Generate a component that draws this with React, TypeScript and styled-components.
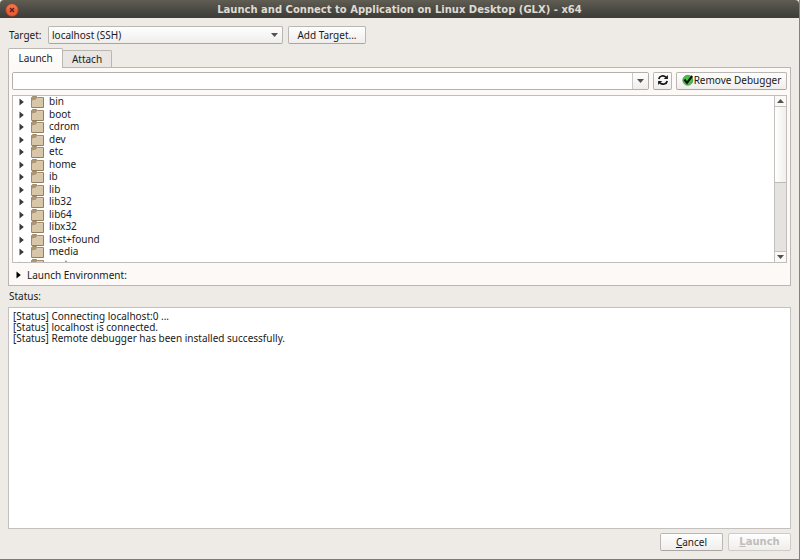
import React, { useState } from "react";
import styled, { createGlobalStyle, css } from "styled-components";

const GlobalStyle = createGlobalStyle`
  * { box-sizing: border-box; }
  body { margin: 0; background: #efebe7; overflow: hidden; }
  body, button, input, select, textarea {
    font-family: "Noto Sans", sans-serif;
    font-size: 10px;
    line-height: 12px;
    color: #1a1a1a;
  }
`;

const raised = css`
  border: 1px solid #bab7b3;
  border-bottom-color: #a9a6a2;
  border-radius: 2px;
  background: linear-gradient(#fefefe, #efeeec);
`;

const Dialog = styled.div`
  display: flex;
  flex-direction: column;
  height: 100vh;
  background: #eeebe7;
  border-right: 1px solid #85827e;
  border-bottom: 1px solid #7d7a77;
`;

const TitleBar = styled.header`
  display: grid;
  grid-template-columns: 24px 1fr 24px;
  align-items: center;
  flex: none;
  height: 18px;
  border-radius: 4px 4px 0 0;
  background: linear-gradient(#605d53, #504e47 40%, #3d3c37);
`;

const Title = styled.h1`
  margin: 0;
  text-align: center;
  font: bold 10px/20px "DejaVu Sans", sans-serif;
  color: #dfdbd2;
  white-space: nowrap;
`;

const CloseButton = styled.button`
  display: flex;
  width: 14px;
  height: 14px;
  margin-left: 5px;
  padding: 0;
  border: 0;
  background: none;
`;

const Body = styled.main`
  display: flex;
  flex-direction: column;
  flex: 1;
  min-height: 0;
  padding: 8px;
`;

const TargetRow = styled.div`
  display: flex;
  align-items: center;
  gap: 5px;
  height: 18px;
`;

const TargetLabel = styled.label`
  width: 35px;
  padding-left: 1px;
`;

const SelectBox = styled.div`
  display: grid;
  align-items: center;
  width: 235px;
  > * { grid-area: 1 / 1; }
  > svg { justify-self: end; margin-right: 5px; pointer-events: none; }
`;

const Select = styled.select`
  ${raised}
  appearance: none;
  width: 100%;
  height: 18px;
  padding: 0 16px 0 3px;
`;

const Button = styled.button<{ $width: number; $bold?: boolean }>`
  ${raised}
  display: flex;
  align-items: center;
  justify-content: center;
  flex: none;
  height: 18px;
  width: ${(p) => p.$width}px;
  padding: 0 0 1px;
  ${(p) => p.$bold && css`font-family: "DejaVu Sans", sans-serif; font-weight: bold;`}
  white-space: nowrap;
  &:disabled { color: #bfbdba; border-color: #cfccc8; }
`;

const TabBar = styled.div`
  display: flex;
  align-items: flex-end;
  height: 19px;
  margin-top: 4px;
`;

const Tab = styled.button<{ $active: boolean }>`
  padding: 0 0 1px;
  border: 1px solid #bab7b3;
  border-bottom: 0;
  border-radius: 2px 2px 0 0;
  ${(p) =>
    p.$active
      ? css`
          width: 55px;
          height: 20px;
          margin-bottom: -1px;
          background: linear-gradient(#ffffff, #fcf9f6);
          z-index: 1;
        `
      : css`
          width: 50px;
          height: 17px;
          margin-left: -1px;
          background: #e9e6e3;
        `}
`;

const Panel = styled.section`
  flex: none;
  padding: 3px 3px 2px;
  border: 1px solid #b9b6b3;
  background: #fcf9f6;
`;

const PathRow = styled.div`
  display: flex;
  align-items: center;
  gap: 4px;
  height: 19px;
  margin-bottom: 5px;
`;

const Combo = styled.div`
  display: flex;
  flex: 1;
  height: 18px;
  border: 1px solid #b3b0ac;
  border-radius: 2px;
  background: #ffffff;
  overflow: hidden;
`;

const PathInput = styled.input`
  flex: 1;
  min-width: 0;
  padding: 0 3px;
  border: 0;
  outline: 0;
`;

const DropButton = styled.button`
  display: grid;
  place-items: center;
  width: 16px;
  padding: 0;
  border: 0;
  border-left: 1px solid #cbc8c5;
  background: linear-gradient(#fefefe, #efeeec);
`;

const Tree = styled.div`
  display: flex;
  height: 168px;
  border: 1px solid #c0bdba;
  background: #ffffff;
  overflow: hidden;
`;

const FolderList = styled.ul`
  display: grid;
  grid-auto-rows: 1fr;
  flex: 1;
  height: 175px;
  margin: 0;
  padding: 0;
  list-style: none;
`;

const FolderRow = styled.li`
  display: flex;
  align-items: center;
  min-height: 0;
`;

const Expander = styled.button`
  display: flex;
  width: 18px;
  padding: 0 0 0 6px;
  border: 0;
  background: none;
`;

const FolderName = styled.span`
  margin-left: 4px;
  padding-bottom: 2px;
`;

const ScrollBar = styled.div`
  display: flex;
  flex-direction: column;
  width: 12px;
  border-left: 1px solid #c3c0bd;
  background: #e4e3e0;
`;

const ScrollButton = styled.button<{ $end?: boolean }>`
  display: grid;
  place-items: center;
  flex: none;
  height: 11px;
  padding: 0;
  border: 0;
  ${(p) => (p.$end ? "border-top" : "border-bottom")}: 1px solid #c3c0bd;
  background: #faf9f8;
`;

const ScrollTrack = styled.div`
  flex: 1;
`;

const ScrollThumb = styled.div`
  height: 76px;
  border-bottom: 1px solid #bdbab7;
  background: linear-gradient(90deg, #ffffff, #f0efed);
`;

const EnvironmentToggle = styled.button`
  display: flex;
  align-items: center;
  gap: 6px;
  height: 17px;
  margin-top: 3px;
  padding: 0 0 0 4px;
  border: 0;
  background: none;
`;

const StatusLabel = styled.label`
  margin: 4px 0 5px;
  padding-left: 1px;
`;

const StatusLog = styled.textarea`
  display: block;
  flex: 1;
  width: 100%;
  min-height: 0;
  padding: 3px 4px;
  border: 1px solid #c3c0bd;
  outline: 0;
  resize: none;
  background: #ffffff;
  line-height: 11px;
`;

const Actions = styled.footer`
  display: flex;
  justify-content: flex-end;
  gap: 5px;
  margin-top: 4px;
`;

const Mnemonic = styled.span`
  text-decoration: underline;
  text-underline-offset: 1px;
`;

const arrows = {
  down: "M0 0h7L3.5 4z",
  up: "M0 4h7L3.5 0z",
};

function Arrow({ dir }: { dir: "down" | "up" }) {
  return (
    <svg width="7" height="4" viewBox="0 0 7 4" aria-hidden="true">
      <path d={arrows[dir]} fill="#54524f" />
    </svg>
  );
}

function RightArrow({ color = "#3a3937" }: { color?: string }) {
  return (
    <svg width="5" height="8" viewBox="0 0 5 8" aria-hidden="true">
      <path d="M.5 .5L4.8 4L.5 7.5z" fill={color} />
    </svg>
  );
}

function FolderIcon() {
  return (
    <svg width="14" height="12" viewBox="0 0 14 12" aria-hidden="true">
      <path d="M.5 11V1.5L1.5 .5H5.5L6.5 1.5H12.5V11z" fill="#ac9673" stroke="#a08b6b" />
      <path d="M1 11.5V5L4.5 4.5L6 2.5H12.5V11.5z" fill="#d8c6a9" />
      <path d="M1.5 4.5H4.5L6 2.5H12" fill="none" stroke="#e7dac4" strokeWidth=".7" />
      <path d="M.5 11.5H12.5V2" fill="none" stroke="#947e5f" />
    </svg>
  );
}

function CloseIcon() {
  return (
    <svg width="14" height="14" viewBox="0 0 14 14" aria-hidden="true">
      <circle cx="7" cy="7" r="6.3" fill="#ea5f38" stroke="#943c22" strokeWidth=".7" />
      <path d="M2 6a5 5 0 0 1 10 0" fill="#f58763" opacity=".45" />
      <path d="M5 5l4 4M9 5l-4 4" stroke="#4f2014" strokeWidth="1.2" />
    </svg>
  );
}

function RefreshIcon() {
  return (
    <svg width="12" height="12" viewBox="0 0 12 12" aria-hidden="true">
      <path d="M1.8 5C2.4 1.7 6.6 .8 9 3.2M10.2 7C9.6 10.3 5.4 11.2 3 8.8" fill="none" stroke="#161616" strokeWidth="1.7" />
      <path d="M10.9 .9V5H6.8zM1.1 11.1V7H5.2z" fill="#161616" />
    </svg>
  );
}

function CheckIcon() {
  return (
    <svg width="12" height="12" viewBox="0 0 12 12" aria-hidden="true">
      <circle cx="5.8" cy="6.3" r="5" fill="#4fbd4b" stroke="#3b923a" strokeWidth=".7" />
      <path d="M2.4 5.5L5 8.8L10.2 2" fill="none" stroke="#0b130b" strokeWidth="2.1" />
    </svg>
  );
}

const folders = [
  "bin", "boot", "cdrom", "dev", "etc", "home", "ib",
  "lib", "lib32", "lib64", "libx32", "lost+found", "media", "mnt",
];

const statusText = [
  "[Status] Connecting localhost:0 ...",
  "[Status] localhost is connected.",
  "[Status] Remote debugger has been installed successfully.",
].join("\n");

export default function App() {
  const [tab, setTab] = useState("Launch");
  const [path, setPath] = useState("");

  return (
    <>
      <GlobalStyle />
      <Dialog>
        <TitleBar>
          <CloseButton aria-label="Close"><CloseIcon /></CloseButton>
          <Title>Launch and Connect to Application on Linux Desktop (GLX) - x64</Title>
        </TitleBar>
        <Body>
          <TargetRow>
            <TargetLabel htmlFor="target">Target:</TargetLabel>
            <SelectBox>
              <Select id="target"><option>localhost (SSH)</option></Select>
              <Arrow dir="down" />
            </SelectBox>
            <Button $width={78}>Add Target...</Button>
          </TargetRow>
          <TabBar role="tablist">
            {["Launch", "Attach"].map((name) => (
              <Tab key={name} role="tab" aria-selected={tab === name} $active={tab === name} onClick={() => setTab(name)}>
                {name}
              </Tab>
            ))}
          </TabBar>
          <Panel role="tabpanel" aria-label={tab}>
            <PathRow>
              <Combo>
                <PathInput aria-label="Application path" value={path} onChange={(e) => setPath(e.target.value)} />
                <DropButton aria-label="Recent paths"><Arrow dir="down" /></DropButton>
              </Combo>
              <Button $width={19} aria-label="Refresh"><RefreshIcon /></Button>
              <Button $width={111}><CheckIcon />Remove Debugger</Button>
            </PathRow>
            <Tree>
              <FolderList>
                {folders.map((name) => (
                  <FolderRow key={name}>
                    <Expander aria-label={`Expand ${name}`}><RightArrow /></Expander>
                    <FolderIcon />
                    <FolderName>{name}</FolderName>
                  </FolderRow>
                ))}
              </FolderList>
              <ScrollBar>
                <ScrollButton aria-label="Scroll up"><Arrow dir="up" /></ScrollButton>
                <ScrollTrack><ScrollThumb /></ScrollTrack>
                <ScrollButton $end aria-label="Scroll down"><Arrow dir="down" /></ScrollButton>
              </ScrollBar>
            </Tree>
            <EnvironmentToggle aria-expanded="false">
              <RightArrow color="#000000" />
              Launch Environment:
            </EnvironmentToggle>
          </Panel>
          <StatusLabel htmlFor="status">Status:</StatusLabel>
          <StatusLog id="status" readOnly value={statusText} />
          <Actions>
            <Button $width={63}><span><Mnemonic>C</Mnemonic>ancel</span></Button>
            <Button $width={63} $bold disabled><span><Mnemonic>L</Mnemonic>aunch</span></Button>
          </Actions>
        </Body>
      </Dialog>
    </>
  );
}
